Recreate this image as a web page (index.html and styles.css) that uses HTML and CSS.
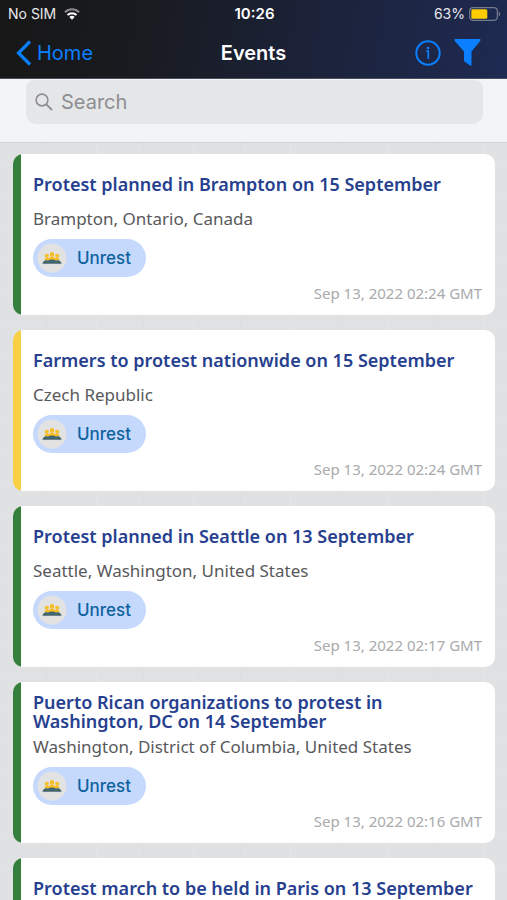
FILE: index.html
```html
<!DOCTYPE html>
<html lang="en">
<head>
<meta charset="utf-8">
<meta name="viewport" content="width=device-width, initial-scale=1">
<title>Events</title>
<link rel="stylesheet" href="styles.css">
</head>
<body>
<svg class="defs" aria-hidden="true">
  <symbol id="crowd" viewBox="0 0 30 30">
    <circle cx="15" cy="15" r="14.500" fill="#e2e2e2"/>
    <g fill="#f6bd27">
      <circle cx="15" cy="11.300" r="2.300"/>
      <circle cx="9.800" cy="12.800" r="2"/>
      <circle cx="20.200" cy="12.800" r="2"/>
      <path d="M7.500 17.500q0-3 2.500-3q1.300 0 2 .8q.8-2 3-2t3 2q.7-.8 2-.8q2.500 0 2.500 3z"/>
    </g>
    <path d="M5.500 20.800q.7-3.600 3.700-3.600q1 0 1.800.2q1.600-.9 4-.9t4 .9q.8-.2 1.800-.2q3 0 3.700 3.600z" fill="#41646f"/>
  </symbol>
</svg>
<header class="top">
  <div class="status">
    <div class="carrier">
      <span>No SIM</span>
      <svg width="16" height="12" viewBox="0 0 16 12" aria-hidden="true">
        <path d="M1 4.200a10 10 0 0 1 14 0" fill="none" stroke="#8b8c90" stroke-width="2"/>
        <path d="M3.500 7a6.500 6.500 0 0 1 9 0" fill="none" stroke="#fff" stroke-width="2"/>
        <path d="M5.300 8.900a4 4 0 0 1 5.400 0L8 11.700z" fill="#fff"/>
      </svg>
    </div>
    <time class="clock">10:26</time>
    <div class="battery">
      <span>63%</span>
      <svg width="32" height="14" viewBox="0 0 32 14" aria-hidden="true">
        <rect x=".7" y=".7" width="27.600" height="12.600" rx="3.500" fill="none" stroke="#757b8d" stroke-width="1.200"/>
        <rect x="2.300" y="2.300" width="16" height="9.400" rx="1.500" fill="#ffcc02"/>
        <path d="M29.700 4.700q1.600.6 1.600 2.300t-1.600 2.300z" fill="#757b8d"/>
      </svg>
    </div>
  </div>
  <nav class="nav">
    <a class="back" href="#home">
      <svg width="16" height="26" viewBox="0 0 16 26" aria-hidden="true"><path d="M14 1.500L2.500 13L14 24.500" fill="none" stroke="#0a7fff" stroke-width="3.200"/></svg>
      <span>Home</span>
    </a>
    <h1>Events</h1>
    <div class="actions">
      <button type="button" aria-label="Information">
        <svg width="26" height="26" viewBox="0 0 26 26"><circle cx="13" cy="13" r="11.700" fill="none" stroke="#0a7fff" stroke-width="2"/><circle cx="13" cy="8" r="1.300" fill="#0a7fff"/><path d="M11.300 11.200h2v7.800" fill="none" stroke="#0a7fff" stroke-width="1.700"/></svg>
      </button>
      <button type="button" aria-label="Filter">
        <svg width="27" height="27" viewBox="0 0 27 27"><path d="M.8 0H26.200Q27 .8 26.200 2L17.500 12.500V26Q17 27 16 26.500L10.500 22.500Q10 22 10 21.500V12.500L.8 2Q0 .8.800 0z" fill="#0a7fff"/></svg>
      </button>
    </div>
  </nav>
</header>
<search class="searchbar">
  <label class="field">
    <svg width="18" height="18" viewBox="0 0 18 18" aria-hidden="true"><circle cx="7" cy="7" r="5.900" fill="none" stroke="#8e8e92" stroke-width="1.600"/><path d="M11.300 11.300L17 17" stroke="#8e8e92" stroke-width="1.900"/></svg>
    <input type="search" placeholder="Search" aria-label="Search">
  </label>
</search>
<main class="list">
  <article class="card">
    <div class="title"><h2>Protest planned in Brampton on 15 September</h2></div>
    <p class="place">Brampton, Ontario, Canada</p>
    <span class="tag"><svg class="tag-icon" aria-hidden="true"><use href="#crowd"/></svg>Unrest</span>
    <time class="date">Sep 13, 2022 02:24 GMT</time>
  </article>
  <article class="card card-warning">
    <div class="title"><h2>Farmers to protest nationwide on 15 September</h2></div>
    <p class="place">Czech Republic</p>
    <span class="tag"><svg class="tag-icon" aria-hidden="true"><use href="#crowd"/></svg>Unrest</span>
    <time class="date">Sep 13, 2022 02:24 GMT</time>
  </article>
  <article class="card">
    <div class="title"><h2>Protest planned in Seattle on 13 September</h2></div>
    <p class="place">Seattle, Washington, United States</p>
    <span class="tag"><svg class="tag-icon" aria-hidden="true"><use href="#crowd"/></svg>Unrest</span>
    <time class="date">Sep 13, 2022 02:17 GMT</time>
  </article>
  <article class="card">
    <div class="title"><h2>Puerto Rican organizations to protest in Washington, DC on 14 September</h2></div>
    <p class="place">Washington, District of Columbia, United States</p>
    <span class="tag"><svg class="tag-icon" aria-hidden="true"><use href="#crowd"/></svg>Unrest</span>
    <time class="date">Sep 13, 2022 02:16 GMT</time>
  </article>
  <article class="card">
    <div class="title"><h2>Protest march to be held in Paris on 13 September</h2></div>
  </article>
</main>
</body>
</html>
```
FILE: styles.css
```css
* { box-sizing: border-box; }
html, body { height: 100%; }
body {
  margin: 0;
  display: flex;
  flex-direction: column;
  overflow: hidden;
  background: #dfe1e3;
  font-family: Inter, "Liberation Sans", sans-serif;
}
h1, h2, p { margin: 0; }
.defs { position: absolute; width: 0; height: 0; }

.top {
  flex: none;
  background: linear-gradient(100deg, #171717 0%, #191b20 28%, #1b2238 60%, #1e2a52 100%);
  border-bottom: 1px solid #4b5060;
  color: #fff;
}
.status, .nav {
  display: grid;
  grid-template-columns: 1fr auto 1fr;
  align-items: center;
}
.status {
  height: 27px;
  padding: 0 6px 0 8px;
  font-size: 14px;
  color: #e9e9ec;
}
.carrier, .battery { display: flex; align-items: center; }
.carrier { gap: 8px; }
.battery { gap: 4px; justify-content: flex-end; }
.clock { font-weight: 600; font-size: 15px; color: #fff; }
.nav {
  height: 51px;
  padding: 0 16px;
}
.back {
  display: flex;
  align-items: center;
  gap: 5px;
  color: #0a7fff;
  font-size: 20px;
  text-decoration: none;
}
h1 { font-size: 20px; font-weight: 600; }
.actions { display: flex; justify-content: flex-end; align-items: center; gap: 13px; padding-right: 10px; }
.actions button {
  display: flex;
  padding: 0;
  border: 0;
  background: none;
}

.searchbar {
  flex: none;
  display: block;
  padding: 1px 24px 18px 26px;
  background: #f3f4f5;
  border-bottom: 1px solid #cfd1d3;
}
.field {
  display: flex;
  align-items: center;
  gap: 8px;
  height: 44px;
  padding: 0 9px;
  border-radius: 8px 8px 11px 11px;
  background: #e5e6e8;
}
.field input {
  flex: 1;
  min-width: 0;
  padding: 0;
  border: 0;
  outline: 0;
  background: none;
  font: 20px Inter, "Liberation Sans", sans-serif;
}
.field input::placeholder { color: #8e8e92; opacity: 1; }

.list {
  flex: 1;
  min-height: 0;
  overflow: hidden;
  display: flex;
  flex-direction: column;
  gap: 15px;
  padding: 11px 12px 0 13px;
  background:
    repeating-linear-gradient(90deg, transparent 0 46px, #dcdee0 46px 47px, transparent 47px 96px, #e3e5e6 96px 97px),
    repeating-linear-gradient(0deg, transparent 0 31px, #e2e4e5 31px 32px),
    #dfe1e3;
}
.card {
  flex: none;
  display: flex;
  flex-direction: column;
  align-items: flex-start;
  min-height: 161px;
  padding: 10px 13px 11px 20px;
  border-radius: 10px;
  background: linear-gradient(90deg, #357f3d 8px, #fff 8px);
  font-family: "Noto Sans", sans-serif;
}
.card-warning { background: linear-gradient(90deg, #f9cf45 8px, #fff 8px); }
.title { display: flex; align-items: center; min-height: 40px; }
h2 {
  max-width: 444px;
  font-size: 18px;
  line-height: 19px;
  font-weight: 600;
  color: #26408f;
}
.place { margin-top: 4px; font-size: 17px; line-height: 22px; color: #58595b; }
.tag {
  display: flex;
  align-items: center;
  gap: 10px;
  height: 38px;
  margin-top: 9px;
  padding: 0 15px 0 4px;
  border-radius: 20px;
  background: #c5d9fd;
  color: #10629f;
  font: 500 17px Inter, sans-serif;
}
.tag-icon { width: 30px; height: 30px; }
.date {
  align-self: flex-end;
  margin-top: 6px;
  font-size: 15px;
  line-height: 20px;
  color: #a9aaac;
}
```
